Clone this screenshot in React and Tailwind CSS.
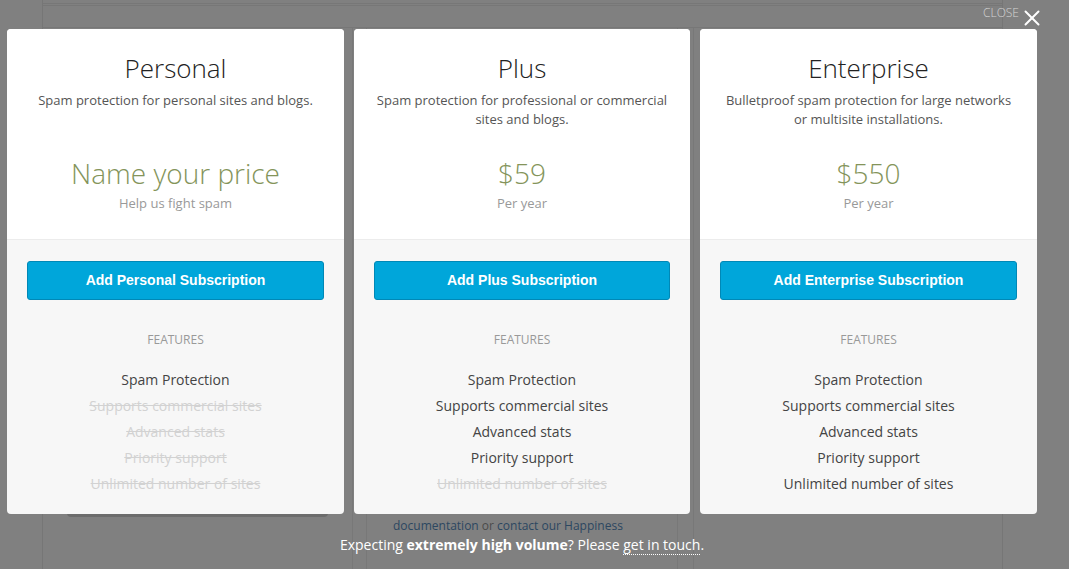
import React from 'react';
import { X } from 'lucide-react';

const plans = [
  {
    name: 'Personal',
    description: 'Spam protection for personal sites and blogs.',
    price: 'Name your price',
    note: 'Help us fight spam',
    button: 'Add Personal Subscription',
    included: 1,
    width: 'w-[337px]',
  },
  {
    name: 'Plus',
    description: 'Spam protection for professional or commercial sites and blogs.',
    price: '$59',
    note: 'Per year',
    button: 'Add Plus Subscription',
    included: 4,
    width: 'w-[336px]',
  },
  {
    name: 'Enterprise',
    description: 'Bulletproof spam protection for large networks or multisite installations.',
    price: '$550',
    note: 'Per year',
    button: 'Add Enterprise Subscription',
    included: 5,
    width: 'w-[337px]',
  },
];

const features = [
  'Spam Protection',
  'Supports commercial sites',
  'Advanced stats',
  'Priority support',
  'Unlimited number of sites',
];

const PlanCard = ({ plan }) => {
  return (
    <div className={`${plan.width} h-[485px] rounded-[4px] overflow-hidden bg-[#f7f7f7] flex flex-col`}>
      <div className="h-[211px] bg-white border-b border-[#ececec] flex flex-col items-center px-[20px] pt-[22px] text-center">
        <h2 className="text-[26px] leading-[34px] font-light text-[#222]">{plan.name}</h2>
        <p className="mt-[6px] h-[38px] text-[13px] leading-[19px] text-[#555]">{plan.description}</p>
        <div className="mt-[26px] text-[28px] leading-[36px] font-light text-[#84945a]">{plan.price}</div>
        <div className="mt-[3px] text-[13px] leading-[18px] text-[#999]">{plan.note}</div>
      </div>
      <div className="flex flex-col items-center px-[20px] pt-[21px]">
        <button className="w-full h-[39px] rounded-[3px] bg-[#00a6da] border border-[#0088b6] text-white text-[14px] font-bold font-['Liberation_Sans',Arial,sans-serif]">
          {plan.button}
        </button>
        <div className="mt-[32px] text-[12px] leading-[16px] uppercase text-[#999]">Features</div>
        <ul className="mt-[19px] flex flex-col items-center">
          {features.map((f, i) => (
            <li
              key={f}
              className={`text-[14px] leading-[26px] ${i < plan.included ? 'text-[#444]' : 'text-[#d2d2d2] line-through'}`}
            >
              {f}
            </li>
          ))}
        </ul>
      </div>
    </div>
  );
};

// the dimmed page behind the modal
const Backdrop = () => {
  return (
    <div className="h-full pl-[42px]">
      <div className="w-[961px] h-full border-x border-[#767676] flex flex-col">
        <div className="h-[3px]" />
        <div className="h-[3px] border-y border-[#777]" />
        <div className="h-[22px] border-b border-[#777]" />
        <div className="flex-1 flex">
          <div className="w-[310px] border-r border-[#787878] flex flex-col justify-end">
            <div className="ml-[24px] w-[261px] h-[4px] mb-[52px] bg-[#6c6c6c] rounded-b" />
          </div>
          <div className="w-[14px] border-r border-[#787878]" />
          <div className="w-[311px] border-r border-[#787878] flex flex-col justify-end pb-[34px] pl-[26px]">
            <p className="text-[12px] leading-[18px] text-[#4b4b4b]">
              <span className="text-[#2c4760]">documentation</span> or{' '}
              <span className="text-[#2c4760]">contact our Happiness</span>
            </p>
          </div>
          <div className="w-[16px] border-r border-[#787878]" />
        </div>
      </div>
    </div>
  );
};

export default function App() {
  return (
    <div className="relative w-full h-[569px] overflow-hidden bg-[#808080] font-['Open_Sans',sans-serif]">
      <Backdrop />
      <div className="absolute inset-0 flex flex-col">
        <div className="h-[29px] flex justify-end items-start pr-[24px]">
          <span className="mt-[5px] text-[12px] leading-[16px] text-[#d4d4d4] font-light">CLOSE</span>
          <X className="mt-[5px] w-[26px] h-[26px] text-white" strokeWidth={1.8} />
        </div>
        <div className="flex gap-[10px] pl-[7px]">
          {plans.map((p) => (
            <PlanCard key={p.name} plan={p} />
          ))}
        </div>
        <p className="mt-[21px] w-[1044px] text-center text-[14px] leading-[20px] text-white">
          Expecting <strong className="font-bold">extremely high volume</strong>? Please{' '}
          <span className="border-b border-dotted border-white">get in touch</span>.
        </p>
      </div>
    </div>
  );
}
